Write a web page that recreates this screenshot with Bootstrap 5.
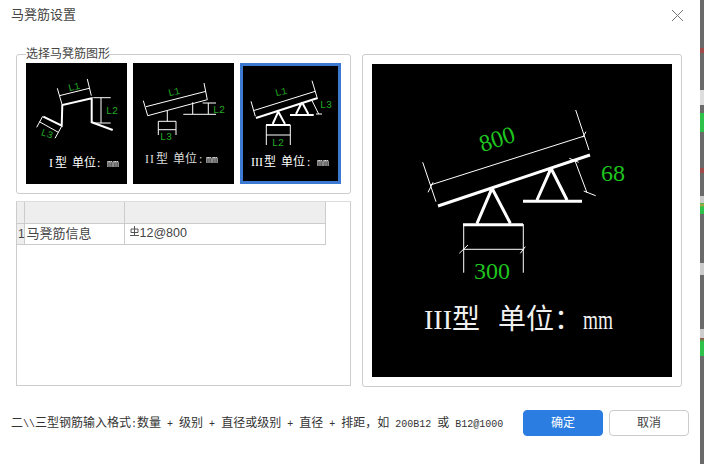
<!DOCTYPE html>
<html lang="zh">
<head>
    <meta charset="utf-8">
    <meta name="viewport" content="width=device-width, initial-scale=1.0">
    <title>马凳筋设置</title>
    <link href="https://cdn.jsdelivr.net/npm/bootstrap@5.3.0/dist/css/bootstrap.min.css" rel="stylesheet">
    <style>
        html, body { height: 464px; overflow: hidden; }
        body { font-family: "Liberation Sans", "Noto Sans CJK SC", sans-serif; font-size: 12px; color: #333; background: #fff; }
        .dlg { width: 700px; height: 464px; flex: none; }
        .side-strip { width: 4px; height: 464px; flex: none; background:
            linear-gradient(#6a6a6a 48px, #a04a4a 48px, #a04a4a 53px, #6a6a6a 53px, #6a6a6a 90px, #ddd 90px, #ddd 105px, #6a6a6a 105px, #6a6a6a 113px, #2fc24a 113px, #2fc24a 132px, #6a6a6a 132px, #6a6a6a 168px, #a04a4a 168px, #a04a4a 173px, #6a6a6a 173px, #6a6a6a 196px, #ccc 196px, #ccc 203px, #2fc24a 203px, #c94 205px, #2fc24a 207px, #2fc24a 214px, #6a6a6a 214px, #6a6a6a 263px, #ccc 263px, #ccc 275px, #6a6a6a 275px, #6a6a6a 329px, #ccc 329px, #ccc 338px, #a04a4a 338px, #2fc24a 342px, #2fc24a 356px, #6a6a6a 356px); }
        .dlg-head { height: 47px; padding: 7px 16px 0 11px; }
        .dlg-title { font-size: 13px; line-height: 16px; color: #444; }
        .dlg-close { width: 13px; height: 13px; margin-top: 2px; background: none; border: 0; padding: 0; line-height: 0; }
        .dlg-main { padding-left: 16px; gap: 11px; }
        .left-pane { width: 335px; }
        .shape-box { height: 147px; margin: 0; padding: 0 9px; border: 1px solid #ccc; border-radius: 3px; min-width: 0; }
        .shape-box legend { float: none; width: auto; margin: 0; padding: 0; font-size: 12px; line-height: 14px; color: #444; }
        .thumb-row { gap: 6px; margin-top: 2px; }
        .thumb { width: 101px; height: 121px; background: #000; display: block; }
        .thumb-sel { outline: 3px solid #3b7ad0; outline-offset: -3px; }
        .grid-box { height: 185px; margin-top: 7px; border: 1px solid #ccc; border-top-color: #ddd; }
        .rebar-grid { width: 308px; table-layout: fixed; border-collapse: collapse; color: #444; margin: 0; }
        .rebar-grid td { border: 1px solid #ccc; border-top: 0; padding: 0 0 0 2px; height: 21px; font-size: 13px; line-height: 20px; }
        .rebar-grid tr:first-child td { background: #eee; }
        .rebar-grid tr td:first-child { background: #eee; padding: 0 0 0 1px; border-left: 0; font-size: 12px; }
        .rebar-grid .val { padding: 0 0 2px 5px; font-size: 12.5px; line-height: 18px; }
        .grade-ico { width: 9px; height: 11px; vertical-align: 0; margin-right: 1px; }
        .preview-box { width: 320px; height: 333px; margin-top: 7px; padding: 9px; border: 1px solid #ccc; border-radius: 3px; }
        .preview { width: 300px; height: 313px; background: #000; display: block; }
        .dlg-foot { padding: 23px 11px 0; }
        .hint { font-family: "Noto Sans CJK SC", sans-serif; font-size: 12px; line-height: 16px; white-space: pre; color: #333; }
        .hint .lat { font-family: "Liberation Mono", monospace; font-size: 10px; }
        .btn-ok, .btn-no { width: 80px; height: 26px; padding: 0; font-size: 12px; line-height: 24px; border-radius: 4px; }
        .btn-ok { background: #2b7de1; border: 1px solid #2b7de1; color: #fff; }
        .btn-no { background: #fff; border: 1px solid #ccc; color: #444; }
        .foot-btns { gap: 6px; }
        .cad { stroke: #fff; fill: none; stroke-width: 1; }
        .cad-b { stroke: #fff; fill: none; stroke-width: 2; }
        .dim-s { fill: #23a823; font-family: "Liberation Mono", monospace; font-size: 10px; text-anchor: middle; }
        .cap-s { fill: #fff; font-family: "Liberation Serif", "Noto Sans CJK SC", serif; font-size: 12px; }
        .cap-m { fill: #fff; font-family: "Liberation Mono", monospace; font-size: 10px; filter: grayscale(1); }
        .cap-d { fill: #ddd; }
        .dim-l { fill: #1fc41f; font-family: "Liberation Serif", serif; font-size: 24px; }
        .cap-l { fill: #f0f0f0; font-family: "Liberation Serif", "Noto Sans CJK SC", serif; font-size: 28px; }
    </style>
</head>
<body class="d-flex">

<div class="dlg d-flex flex-column">
    <div class="dlg-head d-flex justify-content-between align-items-start">
        <div class="dlg-title">马凳筋设置</div>
        <button type="button" class="dlg-close" aria-label="Close">
            <svg width="13" height="13" viewBox="0 0 13 13"><path d="M1 1 12 12M12 1 1 12" stroke="#777" fill="none"/></svg>
        </button>
    </div>

    <div class="dlg-main d-flex">
        <div class="left-pane">
            <fieldset class="shape-box">
                <legend>选择马凳筋图形</legend>
                <div class="thumb-row d-flex">
                    <!-- I -->
                    <svg class="thumb" viewBox="0 0 101 121">
                        <path class="cad-b" d="M17.3 53.7 35.7 62.7 36.3 42 65.7 35.3 65.7 59.3 86.7 67"/>
                        <path class="cad" d="M33.3 32.7 63.3 25.3M31.3 25.3 36 41.3M61.3 16 65.3 32.7M67.3 34.7H84.7M67.3 60H84.7M75 34.7V60M13.3 58.7 32.3 69.3M10.7 64.3 16.7 53.3M29 75.3 35.7 63.3"/>
                        <text class="dim-s" transform="rotate(-14 48 24)" x="48" y="27">L1</text>
                        <text class="dim-s" x="86" y="51">L2</text>
                        <text class="dim-s" transform="rotate(20 21 71)" x="21" y="74">L3</text>
                        <text class="cap-s" y="104"><tspan x="23">I</tspan><tspan x="29">型</tspan><tspan x="46">单位</tspan><tspan x="71">:</tspan></text>
                        <text class="cap-m" x="81" y="104">mm</text>
                    </svg>
                    <!-- II -->
                    <svg class="thumb" viewBox="0 0 101 121">
                        <path class="cad" d="M13 43.7 73 28.3M14.7 52.7 74.3 36.7M10.3 37.7 14.7 52.7M71 20 74.3 36.7M34.3 47.7V58.3M25.3 58.3H43M25.3 58.3V72M43 58.3V72M25.3 66.7H43M59.7 39.3V51M50.3 51.3H83M69.7 40H83M75.3 40V51"/>
                        <text class="dim-s" transform="rotate(-14 41 29)" x="41" y="32">L1</text>
                        <text class="dim-s" x="86" y="50">L2</text>
                        <text class="dim-s" x="33" y="77">L3</text>
                        <text class="cap-s cap-d" y="100"><tspan x="12">I</tspan><tspan x="17">I</tspan><tspan x="23">型</tspan><tspan x="40">单位</tspan><tspan x="66">:</tspan></text>
                        <text class="cap-m" x="73" y="100">mm</text>
                    </svg>
                    <!-- III -->
                    <svg class="thumb thumb-sel" viewBox="0 0 101 121">
                        <path class="cad-b" d="M16 55 77.7 35M26 62H50.3M50 52H73.7M38.3 48.7 32.7 61M38.3 48.7 45 61M62 39.3 56 51M62 39.3 68.3 51"/>
                        <path class="cad" d="M13.3 47.7 75.3 28.3M11 38.3 15.3 53.3M72 17.7 77 34.3M26.3 62V82M50.3 62V82M26.3 72H50.3M72 37.7 78.7 51M76 51H82"/>
                        <text class="dim-s" transform="rotate(-14 41 29)" x="41" y="32">L1</text>
                        <text class="dim-s" x="38" y="83">L2</text>
                        <text class="dim-s" x="86" y="45">L3</text>
                        <text class="cap-s" y="103"><tspan x="11">III</tspan><tspan x="24">型</tspan><tspan x="41">单位</tspan><tspan x="67">:</tspan></text>
                        <text class="cap-m" x="77" y="103">mm</text>
                    </svg>
                </div>
            </fieldset>

            <div class="grid-box">
                <table class="rebar-grid">
                    <colgroup><col style="width:7px"><col style="width:100px"><col style="width:201px"></colgroup>
                    <tr><td></td><td></td><td></td></tr>
                    <tr>
                        <td>1</td>
                        <td>马凳筋信息</td>
                        <td class="val"><svg class="grade-ico" viewBox="0 0 9 11"><path d="M1 3H8V6.5H1ZM4.5 0V9M0 9.5H9" stroke="#444" stroke-width=".9" fill="none"/></svg>12@800</td>
                    </tr>
                </table>
            </div>
        </div>

        <div class="preview-box">
            <svg class="preview" viewBox="0 0 300 313">
                <path d="M66 142 218 91M91 160.7H151M151 137.3H210M120 124.3 105 159.3M120 124.3 138.3 159.3M179 104.3 165 136M179 104.3 195 136" stroke="#fff" stroke-width="3" fill="none"/>
                <path class="cad" d="M58.3 121 212.3 72M50.7 98.3 64 137.7M203.7 46 217 86M56 128.3 61 118.3M210.7 73.3 214 67.7M91.7 160V208.7M151.3 160V208.7M91.7 185.3H151.3M87.3 189.3 96 181M148.3 189.3 153.3 182.7M202.7 96 215 128.7M211.7 127 223.7 131.7M197.3 94.3 206.7 98.3"/>
                <text class="dim-l" transform="rotate(-18 125 75)" x="125" y="83" text-anchor="middle">800</text>
                <text class="dim-l" x="229" y="117">68</text>
                <text class="dim-l" x="120" y="215" text-anchor="middle">300</text>
                <text class="cap-l" x="52" y="265">III型</text>
                <text class="cap-l" x="126" y="265">单位：</text>
                <text class="cap-l" x="211" y="265" textLength="30" lengthAdjust="spacingAndGlyphs">mm</text>
            </svg>
        </div>
    </div>

    <div class="dlg-foot d-flex justify-content-between align-items-center">
        <div class="hint">二<span class="lat">\\</span>三型钢筋输入格式<span class="lat">:</span>数量<span class="lat"> + </span>级别<span class="lat"> + </span>直径或级别<span class="lat"> + </span>直径<span class="lat"> + </span>排距，如<span class="lat"> 200B12 </span>或<span class="lat"> B12@1000</span></div>
        <div class="foot-btns d-flex">
            <button type="button" class="btn btn-ok">确定</button>
            <button type="button" class="btn btn-no">取消</button>
        </div>
    </div>
</div>
<div class="side-strip"></div>

<script src="https://cdn.jsdelivr.net/npm/bootstrap@5.3.0/dist/js/bootstrap.bundle.min.js"></script>
</body>
</html>
